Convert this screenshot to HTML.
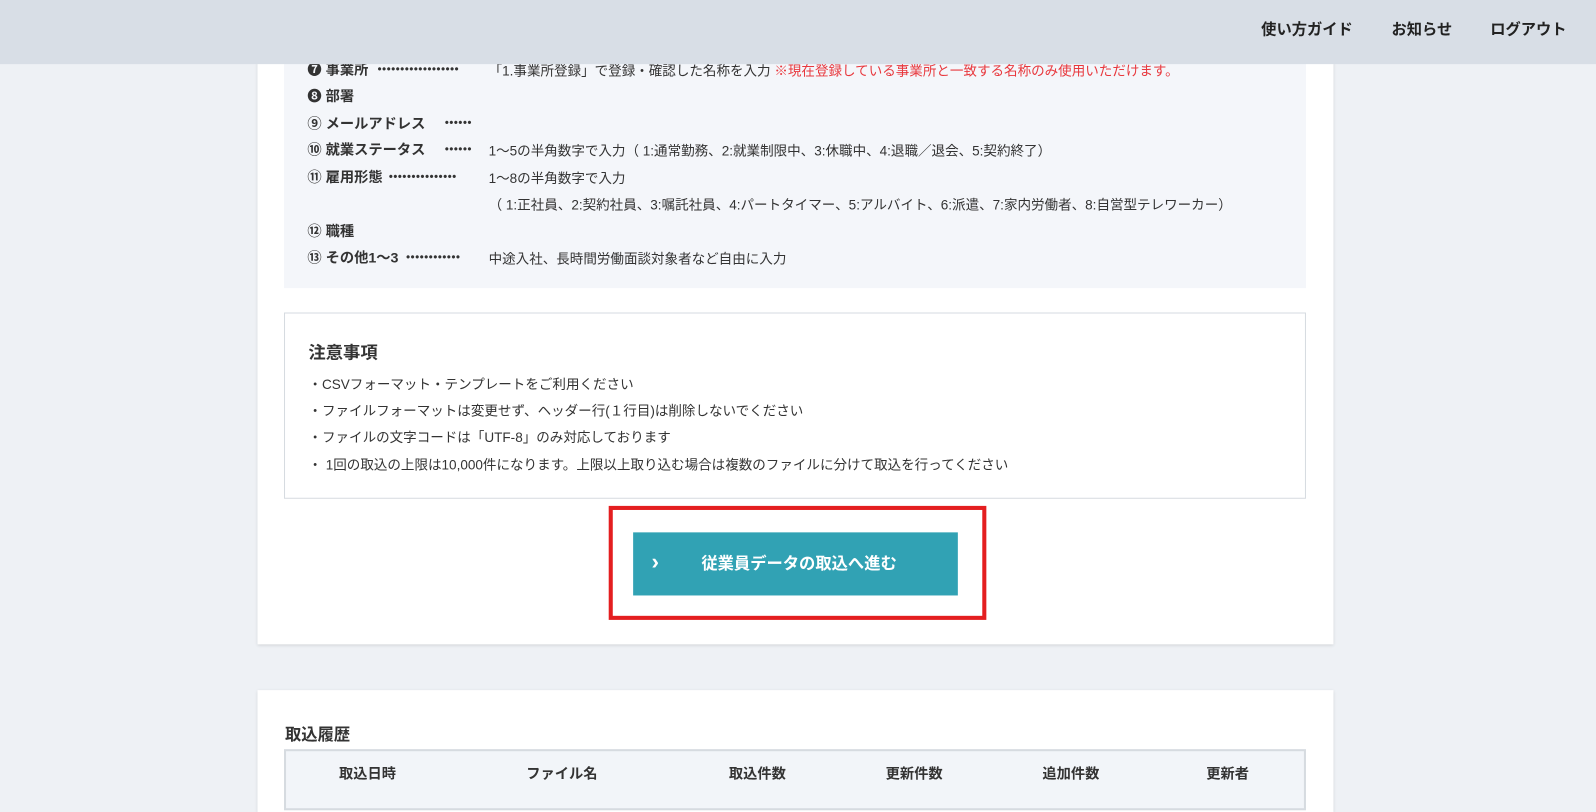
<!DOCTYPE html>
<html><head><meta charset="utf-8"><style>
*{margin:0;padding:0;box-sizing:border-box}
body{width:1596px;height:786px;overflow:hidden;background:#eef1f5;font-family:"Liberation Sans","Noto Sans CJK JP",sans-serif;color:#333;font-size:14px;position:relative}
.wrap{position:absolute;left:0;top:0;width:1568px;height:772px;transform:scale(1.0179);transform-origin:0 0}
.hdr{position:absolute;left:0;top:0;width:1568px;height:63px;background:#d8dee6;z-index:5}
.hdr span{position:absolute;top:18px;font-size:15px;font-weight:bold;color:#222}
.card{position:absolute;left:253px;width:1057px;background:#fff;box-shadow:0 1px 3px rgba(0,0,0,.12)}
.gray{position:absolute;left:26px;top:0;width:1004px;height:283px;background:#f4f6fa}
.row{position:absolute;left:49px;font-size:14px;white-space:nowrap}
.row b{font-weight:bold}
.row .d{position:absolute;font-size:11px;letter-spacing:0.6px;top:4px;font-weight:bold}
.row .v{position:absolute;left:178px;font-size:13.3px;top:1px}
.note{position:absolute;left:26px;top:307px;width:1004px;height:183px;border:1px solid #d6dbe0;background:#fff}
.note h3{position:absolute;left:23px;top:24px;font-size:17px;font-weight:bold}
.note p{position:absolute;left:23px;font-size:13.3px}
.red{position:absolute;left:345px;top:497px;width:371px;height:112px;border:4px solid #e41e20}
.btn{position:absolute;left:369px;top:523px;width:319px;height:62px;background:#31a2b4;color:#fff;font-weight:bold;font-size:16px}
</style></head><body><div class="wrap">
<div class="hdr"><span style="left:1239px">使い方ガイド</span><span style="left:1367px">お知らせ</span><span style="left:1464px">ログアウト</span></div>
<div class="card" style="top:0;height:633px">
<div class="gray"></div>
<div class="row" style="top:58px"><b>❼ 事業所</b><span class="d" style="left:69px">••••••••••••••••••</span><span class="v">「1.事業所登録」で登録・確認した名称を入力 <span style="color:#e8383d">※現在登録している事業所と一致する名称のみ使用いただけます。</span></span></div>
<div class="row" style="top:84px"><b>❽ 部署</b></div>
<div class="row" style="top:111px"><b>⑨ メールアドレス</b><span class="d" style="left:135px">••••••</span></div>
<div class="row" style="top:137px"><b>⑩ 就業ステータス</b><span class="d" style="left:135px">••••••</span><span class="v">1〜5の半角数字で入力（ 1:通常勤務、2:就業制限中、3:休職中、4:退職／退会、5:契約終了）</span></div>
<div class="row" style="top:164px"><b>⑪ 雇用形態</b><span class="d" style="left:80px">•••••••••••••••</span><span class="v">1〜8の半角数字で入力</span></div>
<div class="row" style="top:190px"><span class="v" style="left:178px">（ 1:正社員、2:契約社員、3:嘱託社員、4:パートタイマー、5:アルバイト、6:派遣、7:家内労働者、8:自営型テレワーカー）</span></div>
<div class="row" style="top:217px"><b>⑫ 職種</b></div>
<div class="row" style="top:243px"><b>⑬ その他1〜3</b><span class="d" style="left:97px">••••••••••••</span><span class="v">中途入社、長時間労働面談対象者など自由に入力</span></div>
<div class="note"><h3>注意事項</h3>
<p style="top:59px">・CSVフォーマット・テンプレートをご利用ください</p>
<p style="top:85px">・ファイルフォーマットは変更せず、ヘッダー行(１行目)は削除しないでください</p>
<p style="top:111px">・ファイルの文字コードは「UTF-8」のみ対応しております</p>
<p style="top:138px">・ 1回の取込の上限は10,000件になります。上限以上取り込む場合は複数のファイルに分けて取込を行ってください</p>
</div>
<div class="red"></div>
<div class="btn"><span style="position:absolute;left:18px;top:16px;font-size:22px">›</span><span style="position:absolute;left:67px;top:17px">従業員データの取込へ進む</span></div>
</div>
<div class="card" style="top:678px;height:120px">
<div style="position:absolute;left:27px;top:30px;font-size:16px;font-weight:bold">取込履歴</div>
<div style="position:absolute;left:26px;top:58px;width:1004px;height:60px;background:#f2f5f9;border:2px solid #d6dbe0;font-weight:bold">
<span style="position:absolute;left:52px;top:12px">取込日時</span>
<span style="position:absolute;left:236px;top:12px">ファイル名</span>
<span style="position:absolute;left:435px;top:12px">取込件数</span>
<span style="position:absolute;left:589px;top:12px">更新件数</span>
<span style="position:absolute;left:743px;top:12px">追加件数</span>
<span style="position:absolute;left:904px;top:12px">更新者</span>
</div></div>
</div></body></html>
